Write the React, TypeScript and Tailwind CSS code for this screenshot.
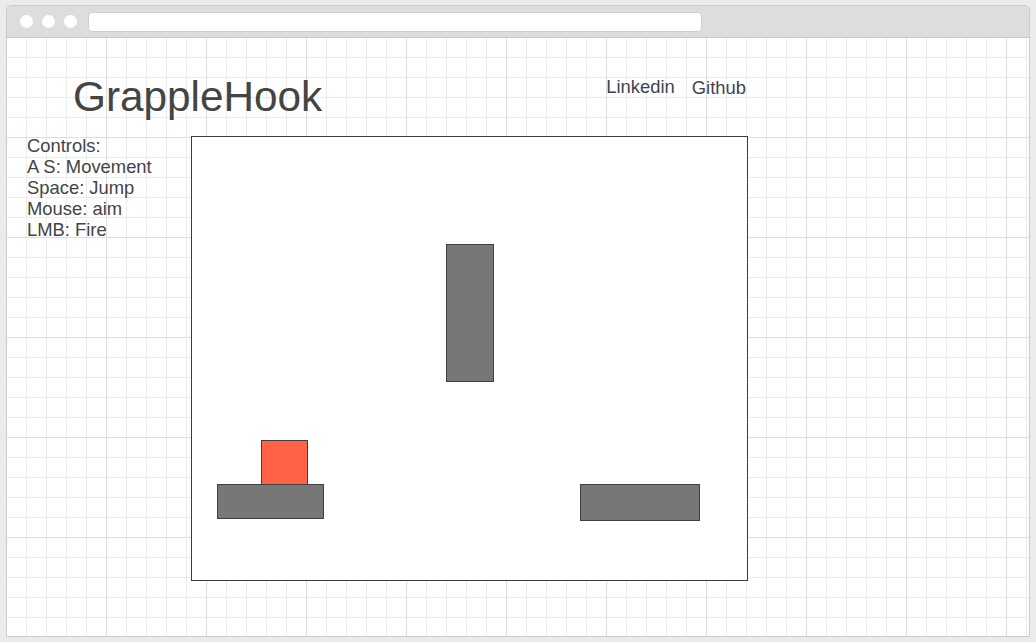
import React from "react";

const controls = ["Controls:", "A S: Movement", "Space: Jump", "Mouse: aim", "LMB: Fire"];

// blocks inside the game canvas, coords relative to the canvas inner box
const blocks = [
  { id: "pillar", left: 254, top: 107, w: 48, h: 138, color: "bg-[#777777]" },
  { id: "floor-left", left: 25, top: 347, w: 107, h: 35, color: "bg-[#777777]" },
  { id: "floor-right", left: 388, top: 347, w: 120, h: 37, color: "bg-[#777777]" },
  { id: "player", left: 69, top: 303, w: 47, h: 45, color: "bg-[#ff6347]" },
];

const GameCanvas: React.FC = () => (
  <div className="relative w-[557px] h-[445px] bg-white border border-[#3c3c3c]">
    {blocks.map((b) => (
      <div
        key={b.id}
        className={`absolute border border-[#404040] ${b.color}`}
        style={{ left: b.left, top: b.top, width: b.w, height: b.h }}
      />
    ))}
  </div>
);

export default function App() {
  return (
    <div
      className="w-[1036px] h-[642px] bg-[#ebebeb] pt-[5px] pl-[6px]"
      style={{ fontFamily: '"Liberation Sans", Arial, sans-serif' }}
    >
      <div className="w-[1024px] h-[632px] flex flex-col border border-[#cbcbcb] rounded-t-[5px] overflow-hidden bg-white">
        {/* browser chrome */}
        <div className="h-[32px] shrink-0 flex items-center gap-[9px] pl-[13px] bg-[#dddddd] border-b border-[#c6c6c6]">
          <span className="w-[13px] h-[13px] rounded-full bg-white" />
          <span className="w-[13px] h-[13px] rounded-full bg-white" />
          <span className="w-[13px] h-[13px] rounded-full bg-white" />
          <div className="ml-[2px] w-[614px] h-[20px] bg-white rounded-[4px] border border-[#cfcfcf]" />
        </div>

        {/* page with grid paper background */}
        <div className="flex-1 pl-[20px] pt-[35px] text-[#444444] bg-white bg-[linear-gradient(to_right,#dedede_1px,transparent_1px),linear-gradient(to_bottom,#dedede_1px,transparent_1px),linear-gradient(to_right,#ececec_1px,transparent_1px),linear-gradient(to_bottom,#ececec_1px,transparent_1px)] [background-size:100px_100px,100px_100px,20px_20px,20px_20px] [background-position:-1px_-1px]">
          <div className="w-[721px]">
            <div className="flex items-start justify-between">
              <h1 className="ml-[46px] text-[42.3px] leading-[48px] font-normal">GrappleHook</h1>
              <nav className="mt-[3px] mr-[2px] flex gap-[17px] text-[18.4px] leading-[21px] text-[#3f4450]">
                <a href="#">Linkedin</a>
                <a href="#" className="mt-[1px]">Github</a>
              </nav>
            </div>
            <div className="mt-[15px] flex items-start">
              <div className="-mt-[1px] w-[164px] text-[18.4px] leading-[21px]">
                {controls.map((c) => (
                  <p key={c}>{c}</p>
                ))}
              </div>
              <GameCanvas />
            </div>
          </div>
        </div>
      </div>
    </div>
  );
}
